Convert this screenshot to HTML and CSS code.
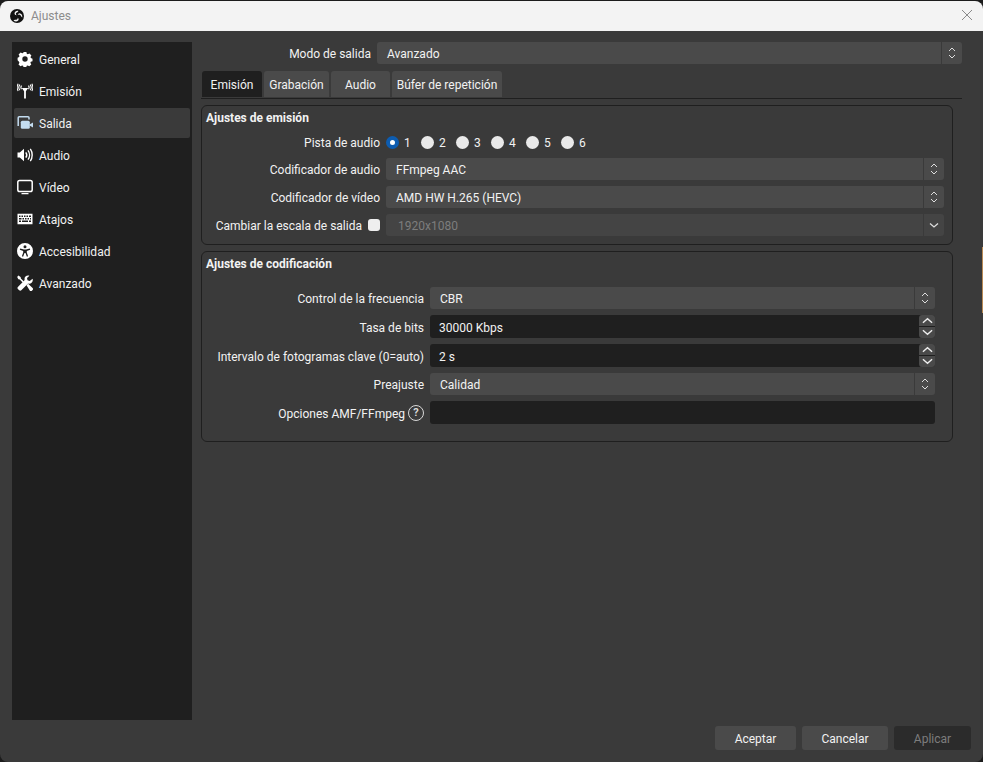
FILE: index.html
```html
<!DOCTYPE html>
<html lang="es">
<head>
  <meta charset="UTF-8">
  <title>Ajustes</title>
  <link rel="stylesheet" href="styles.css">
</head>
<body>
  <div class="window">

    <!-- Title bar -->
    <div class="titlebar">
      <svg class="logo" viewBox="0 0 16 16">
        <circle cx="8" cy="8" r="8" fill="#111"/>
        <path d="M9.600 2.200c-2.200-.5-4.200.7-4.400 2.600-.1 1.300 1 2.400 2.400 2.300-1-.6-1.100-1.900-.3-2.700.6-.7 1.700-.9 2.300-2.200z" fill="#f3f3f3"/>
        <path d="M13.900 9.700c.6-2.200-.4-4.200-2.300-4.700-1.300-.3-2.600.6-2.700 1.900.7-.9 2-.8 2.800 0 .7.700 1.100 1.800 2.200 2.800z" fill="#f3f3f3"/>
        <path d="M4 13c1.700 1.600 4 1.600 5.300.2.900-1 .6-2.600-.5-3.300.3 1.100-.5 2.200-1.600 2.400-1 .2-2-.1-3.200.7z" fill="#f3f3f3"/>
      </svg>
      <span class="title">Ajustes</span>
      <svg class="close" viewBox="0 0 12 12"><path d="M1 1l10 10M11 1L1 11" stroke="#8a8a8a" stroke-width="1" fill="none"/></svg>
    </div>

    <div class="main">
      <!-- Sidebar -->
      <div class="sidebar">
        <div class="nav-item">
          <svg viewBox="0 0 16 16"><path fill-rule="evenodd" d="M6.600 1h2.800l.4 1.800 1 .5 1.700-.8 1.900 2-.9 1.600.4 1 1.600.6v2.600l-1.700.5-.4 1 .9 1.600-2 1.900-1.600-.9-1 .4-.5 1.700H6.600l-.5-1.700-1-.4-1.600.9-2-1.900.9-1.600-.4-1L.6 9.300V6.700l1.500-.6.4-1-.9-1.600 2-2 1.600.8 1-.4zM8 5.300a2.700 2.700 0 1 0 0 5.400 2.700 2.700 0 0 0 0-5.400z" fill="#fff"/></svg>
          General
        </div>
        <div class="nav-item">
          <svg viewBox="0 0 16 16"><path d="M4.800 5h6.400L8.900 8.200v7.300H7.100V8.200z" fill="#fff"/><path d="M4.600 2.600C3.800 3.600 3.800 5.200 4.600 6.200M11.400 2.600c.8 1 .8 2.600 0 3.600M2.900 1.600C1.600 3.200 1.600 5.600 2.900 7.200M13.100 1.600c1.300 1.600 1.300 4 0 5.600M1.200.8C-.1 2.900-.1 5.900 1.200 8M14.800.8c1.300 2.100 1.300 5.100 0 7.200" stroke="#fff" stroke-width="1.100" fill="none"/></svg>
          Emisión
        </div>
        <div class="nav-item active">
          <svg viewBox="0 0 16 16"><path d="M1.200 11V2.800c0-.6.400-1 1-1H11c.6 0 1 .4 1 1V4.500" stroke="#c3dcf0" stroke-width="1.500" fill="none"/><rect x="3.800" y="5.800" width="9" height="8" rx="1.500" fill="#c3dcf0"/><path d="M12.500 9.500l3.500-2v5l-3.500-2z" fill="#c3dcf0"/></svg>
          Salida
        </div>
        <div class="nav-item">
          <svg viewBox="0 0 16 16"><path d="M.5 5.500h2.300L7 1.800v12.400L2.800 10.500H.5z" fill="#fff"/><path d="M8.800 5.300c1.100 1.500 1.100 3.900 0 5.400M11 3.300c2 2.700 2 6.700 0 9.400M13.300 1.800c2.500 3.600 2.500 8.800 0 12.400" stroke="#fff" stroke-width="1.400" fill="none"/></svg>
          Audio
        </div>
        <div class="nav-item">
          <svg viewBox="0 0 16 16"><rect x=".8" y="1.500" width="14.400" height="11" rx="1.800" stroke="#fff" stroke-width="1.500" fill="none"/><path d="M4.500 14.600h7" stroke="#fff" stroke-width="1.300"/></svg>
          Vídeo
        </div>
        <div class="nav-item">
          <svg viewBox="0 0 16 16"><path fill-rule="evenodd" d="M.500 2.800h15v10.400H.500zM2 4.500v1.400h1.500V4.500zm2.500 0v1.400H6V4.500zm2.500 0v1.400h1.500V4.500zm2.500 0v1.400H11V4.500zm2.500 0v1.400h2V4.500zM2 7v1.400h2.500V7zm3.500 0v1.400H7V7zM8 7v1.400h1.500V7zm2.500 0v1.400H12V7zM13 7v1.400h1V7zM2 9.500v1.400h2V9.500zm3 0v1.400h6V9.500zm7 0v1.400h2V9.500z" fill="#fff"/></svg>
          Atajos
        </div>
        <div class="nav-item">
          <svg viewBox="0 0 16 16"><path fill-rule="evenodd" d="M8 0a8 8 0 1 1 0 16A8 8 0 0 1 8 0zm0 2.300a1.500 1.500 0 1 0 0 3 1.500 1.500 0 0 0 0-3zM3.200 5.600l-.4 1.200 3.400 1.100v1.700l-1.300 3.600 1.200.5L7.500 10h1l1.400 3.700 1.200-.5-1.300-3.600V7.900l3.400-1.100-.4-1.200-3.800 1H7z" fill="#fff"/></svg>
          Accesibilidad
        </div>
        <div class="nav-item">
          <svg viewBox="0 0 16 16"><path d="M1.300.6l2.300 1.300.3 1.500 3 3-1.200 1.200-3-3-1.400-.3L.2 2z" fill="#fff"/><path d="M15.600 3.800c.5 1.500.1 3-1 4-1 .9-2.300 1.100-3.500.7L4.300 15.300c-.6.600-1.500.6-2.100 0l-1.300-1.300c-.6-.6-.6-1.500 0-2.100l6.800-6.800c-.4-1.200-.2-2.600.8-3.500 1-1 2.500-1.400 3.900-.9L10 3.100l.5 2.200 2.200.6z" fill="#fff"/><path d="M9.500 10.200l1.600-1.500 4.500 4.300c.6.600.6 1.500 0 2l-.7.700c-.6.500-1.400.5-2 0z" fill="#fff"/></svg>
          Avanzado
        </div>
      </div>

      <!-- Settings content -->
      <div class="content">
        <div class="mode-row">
          <label class="mode-label">Modo de salida</label>
          <div class="combo">
            <span class="combo-text">Avanzado</span>
            <span class="combo-btn"><svg viewBox="0 0 8 14"><path d="M1 5l3-3 3 3M1 9l3 3 3-3" stroke="#ddd" fill="none"/></svg></span>
          </div>
        </div>

        <div class="tabs">
          <div class="tab active">Emisión</div>
          <div class="tab tab-rec">Grabación</div>
          <div class="tab tab-audio">Audio</div>
          <div class="tab tab-replay">Búfer de repetición</div>
        </div>

        <div class="group group-stream">
          <div class="group-title">Ajustes de emisión</div>
          <div class="rows">
            <div class="row row-tracks">
              <label class="row-label">Pista de audio</label>
              <div class="radios">
                <span class="radio selected"></span><span class="radio-text">1</span>
                <span class="radio"></span><span class="radio-text">2</span>
                <span class="radio"></span><span class="radio-text">3</span>
                <span class="radio"></span><span class="radio-text">4</span>
                <span class="radio"></span><span class="radio-text">5</span>
                <span class="radio"></span><span class="radio-text">6</span>
              </div>
            </div>
            <div class="row">
              <label class="row-label">Codificador de audio</label>
              <div class="combo">
                <span class="combo-text">FFmpeg AAC</span>
                <span class="combo-btn"><svg viewBox="0 0 8 14"><path d="M1 5l3-3 3 3M1 9l3 3 3-3" stroke="#ddd" fill="none"/></svg></span>
              </div>
            </div>
            <div class="row">
              <label class="row-label">Codificador de vídeo</label>
              <div class="combo">
                <span class="combo-text">AMD HW H.265 (HEVC)</span>
                <span class="combo-btn"><svg viewBox="0 0 8 14"><path d="M1 5l3-3 3 3M1 9l3 3 3-3" stroke="#ddd" fill="none"/></svg></span>
              </div>
            </div>
            <div class="row">
              <label class="row-label">Cambiar la escala de salida <span class="checkbox"></span></label>
              <div class="combo disabled">
                <span class="combo-text">1920x1080</span>
                <span class="combo-btn"><svg viewBox="0 0 10 14"><path d="M1 5.500l4 3.500 4-3.500" stroke="#ddd" stroke-width="1.300" fill="none"/></svg></span>
              </div>
            </div>
          </div>
        </div>

        <div class="group group-encoder">
          <div class="group-title">Ajustes de codificación</div>
          <div class="rows">
            <div class="row">
              <label class="row-label">Control de la frecuencia</label>
              <div class="combo">
                <span class="combo-text">CBR</span>
                <span class="combo-btn"><svg viewBox="0 0 8 14"><path d="M1 5l3-3 3 3M1 9l3 3 3-3" stroke="#ddd" fill="none"/></svg></span>
              </div>
            </div>
            <div class="row tall">
              <label class="row-label">Tasa de bits</label>
              <div class="input">
                <span class="combo-text">30000 Kbps</span>
                <span class="spin">
                  <span><svg viewBox="0 0 12 7"><path d="M1 6l5-4.500L11 6" stroke="#eee" stroke-width="1.500" fill="none"/></svg></span>
                  <span><svg viewBox="0 0 12 7"><path d="M1 1l5 4.500L11 1" stroke="#eee" stroke-width="1.500" fill="none"/></svg></span>
                </span>
              </div>
            </div>
            <div class="row tall">
              <label class="row-label">Intervalo de fotogramas clave (0=auto)</label>
              <div class="input">
                <span class="combo-text">2 s</span>
                <span class="spin">
                  <span><svg viewBox="0 0 12 7"><path d="M1 6l5-4.500L11 6" stroke="#eee" stroke-width="1.500" fill="none"/></svg></span>
                  <span><svg viewBox="0 0 12 7"><path d="M1 1l5 4.500L11 1" stroke="#eee" stroke-width="1.500" fill="none"/></svg></span>
                </span>
              </div>
            </div>
            <div class="row">
              <label class="row-label">Preajuste</label>
              <div class="combo">
                <span class="combo-text">Calidad</span>
                <span class="combo-btn"><svg viewBox="0 0 8 14"><path d="M1 5l3-3 3 3M1 9l3 3 3-3" stroke="#ddd" fill="none"/></svg></span>
              </div>
            </div>
            <div class="row tall">
              <label class="row-label">Opciones AMF/FFmpeg
                <span class="help">?</span>
              </label>
              <div class="input"></div>
            </div>
          </div>
        </div>
      </div>
    </div>

    <!-- Dialog buttons -->
    <div class="footer">
      <button class="btn btn-ok">Aceptar</button>
      <button class="btn btn-cancel">Cancelar</button>
      <button class="btn btn-apply">Aplicar</button>
    </div>
  </div>

  <!-- Sliver of the desktop showing behind the window -->
  <div class="desktop-sliver"></div>
</body>
</html>
```

FILE: styles.css
```css
html, body {
  margin: 0;
  height: 100%;
  overflow: hidden;
  background: #1c1c1c;
}

body {
  font-family: Roboto, sans-serif;
  font-size: 12px;
  color: #f2f2f2;
}

.window {
  height: 761px;
  margin-top: 1px;
  display: flex;
  flex-direction: column;
  background: #3a3a3a;
  border-radius: 8px;
  overflow: hidden;
}

.desktop-sliver {
  position: absolute;
  right: 0;
  top: 247px;
  width: 1px;
  height: 66px;
  background: #b98a55;
}

/* Title bar */
.titlebar {
  height: 30px;
  flex: none;
  display: flex;
  align-items: center;
  background: #f3f3f3;
  padding-left: 10px;
}

.logo {
  width: 14px;
  height: 14px;
}

.title {
  margin-left: 7px;
  color: #8c8c8c;
}

.close {
  width: 12px;
  height: 12px;
  margin: 0 10px 2px auto;
}

/* Main area */
.main {
  flex: 1;
  min-height: 0;
  display: flex;
  padding: 11px 21px 0 12px;
}

.sidebar {
  width: 176px;
  flex: none;
  background: #1f1f1f;
  padding: 2px 2px 0;
  display: flex;
  flex-direction: column;
  gap: 2px;
}

.nav-item {
  height: 30px;
  box-sizing: border-box;
  flex: none;
  display: flex;
  align-items: center;
  gap: 6px;
  padding: 2px 0 0 3px;
  border-radius: 2px;
}

.nav-item svg {
  width: 16px;
  height: 16px;
  margin-top: -2px;
}

.nav-item.active {
  background: #3a3a3a;
}

.content {
  flex: 1;
  margin-left: 9px;
  min-width: 0;
}

/* Combos and inputs */
.mode-row {
  display: flex;
  gap: 6px;
  height: 22px;
}

.mode-label {
  width: 170px;
  text-align: right;
  line-height: 24px;
}

.combo {
  flex: 1;
  display: flex;
  align-items: center;
  background: #4a4a4a;
  border-radius: 3px;
  min-width: 0;
}

.combo-text {
  flex: 1;
  padding: 2px 0 0 10px;
}

.combo-btn {
  width: 20px;
  height: 100%;
  flex: none;
  border-left: 1px solid #3a3a3a;
  display: flex;
  align-items: center;
  justify-content: center;
}

.combo-btn svg {
  width: 8px;
  height: 14px;
}

.combo.disabled {
  background: #444;
}

.combo.disabled .combo-text {
  padding-left: 12px;
  color: #7d7d7d;
}

.combo.disabled .combo-btn svg {
  width: 10px;
}

.input {
  flex: 1;
  display: flex;
  align-items: center;
  background: #1f1f1f;
  border-radius: 3px;
  min-width: 0;
}

.input .combo-text {
  padding-left: 9px;
}

.spin {
  width: 16px;
  height: 100%;
  flex: none;
  display: flex;
  flex-direction: column;
  gap: 1px;
}

.spin span {
  flex: 1;
  background: #4a4a4a;
  display: flex;
  align-items: center;
  justify-content: center;
}

.spin span:first-child {
  border-radius: 3px 3px 0 0;
}

.spin span:last-child {
  border-radius: 0 0 3px 3px;
}

.spin svg {
  width: 11px;
  height: 7px;
}

/* Tabs */
.tabs {
  display: flex;
  gap: 2px;
  margin-top: 7px;
  padding: 0 0 1px 1px;
  border-bottom: 1px solid #1f1f1f;
}

.tab {
  height: 26px;
  width: 60px;
  flex: none;
  text-align: center;
  line-height: 29px;
  background: #4a4a4a;
  border-radius: 3px 3px 0 0;
}

.tab.active {
  background: #1f1f1f;
}

.tab-rec {
  width: 65px;
}

.tab-audio {
  width: 59px;
}

.tab-replay {
  width: 110px;
}

/* Groups */
.group {
  width: 750px;
  margin-top: 6px;
  border: 1px solid #1f1f1f;
  border-radius: 6px;
}

.group-title {
  font-weight: 700;
  padding-left: 4px;
  line-height: 18px;
  margin-top: 3px;
}

.group-stream {
  height: 138px;
}

.group-stream .rows {
  margin-top: 3px;
  padding-right: 8px;
}

.group-stream .row-label {
  width: 178px;
}

.group-encoder {
  height: 189px;
}

.group-encoder .rows {
  margin-top: 14px;
  padding-right: 17px;
}

.group-encoder .row-label {
  width: 222px;
}

.rows {
  display: flex;
  flex-direction: column;
  gap: 6px;
}

.row {
  height: 22px;
  display: flex;
  gap: 6px;
}

.row.tall {
  height: 23px;
}

.row-label {
  flex: none;
  box-sizing: border-box;
  display: flex;
  align-items: center;
  justify-content: flex-end;
  gap: 6px;
  padding-top: 2px;
  white-space: nowrap;
}

.row-tracks .row-label {
  padding-top: 4px;
}

/* Radios and checkbox */
.radios {
  display: flex;
  align-items: center;
  padding-top: 2px;
}

.radio {
  width: 13px;
  height: 13px;
  border-radius: 50%;
  background: #e9e9e9;
  box-sizing: border-box;
}

.radio.selected {
  background: #fff;
  border: 4px solid #0d5cb0;
}

.radio-text {
  width: 22px;
  padding: 2px 0 0 5px;
  box-sizing: border-box;
}

.checkbox {
  width: 12px;
  height: 12px;
  margin-bottom: 2px;
  background: #eee;
  border-radius: 3px;
}

.help {
  width: 14px;
  height: 14px;
  margin: 0 0 2px -3px;
  border: 1.500px solid #d8d8d8;
  border-radius: 50%;
  font-size: 11px;
  font-weight: 700;
  line-height: 14px;
  text-align: center;
  color: #d8d8d8;
}

/* Footer */
.footer {
  height: 42px;
  flex: none;
  display: flex;
  justify-content: flex-end;
  gap: 6px;
  padding: 6px 12px 0 0;
  box-sizing: border-box;
}

.btn {
  height: 24px;
  border: none;
  border-radius: 3px;
  background: #4a4a4a;
  color: #f2f2f2;
  font: inherit;
  padding: 2px 0 0;
}

.btn-ok {
  width: 81px;
}

.btn-cancel {
  width: 86px;
}

.btn-apply {
  width: 77px;
  background: #2b2b2b;
  color: #7d7d7d;
}
```
